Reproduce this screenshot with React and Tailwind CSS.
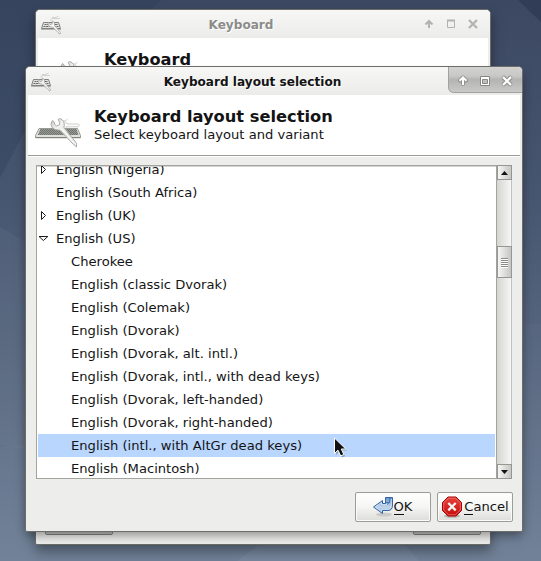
import React from "react";

const rows = [
  { label: "English (Nigeria)", arrow: "closed" },
  { label: "English (South Africa)" },
  { label: "English (UK)", arrow: "closed" },
  { label: "English (US)", arrow: "open" },
  { label: "Cherokee", child: true },
  { label: "English (classic Dvorak)", child: true },
  { label: "English (Colemak)", child: true },
  { label: "English (Dvorak)", child: true },
  { label: "English (Dvorak, alt. intl.)", child: true },
  { label: "English (Dvorak, intl., with dead keys)", child: true },
  { label: "English (Dvorak, left-handed)", child: true },
  { label: "English (Dvorak, right-handed)", child: true },
  { label: "English (intl., with AltGr dead keys)", child: true, selected: true },
  { label: "English (Macintosh)", child: true },
];

function Wallpaper() {
  return (
    <svg className="absolute inset-0" width="541" height="561" viewBox="0 0 541 561">
      <defs>
        <linearGradient id="sky" x1="0" y1="0" x2="0" y2="1">
          <stop offset="0" stopColor="#3c4862" />
          <stop offset="0.35" stopColor="#475670" />
          <stop offset="0.65" stopColor="#596880" />
          <stop offset="1" stopColor="#718197" />
        </linearGradient>
      </defs>
      <rect width="541" height="561" fill="url(#sky)" />
      <path d="M162 0L135 22L36 110L0 178V0Z" fill="#2b3a55" opacity=".3" />
      <path d="M518 0H541V22Z" fill="#25304c" opacity=".5" />
      <path d="M0 227L26 242V450L0 445Z" fill="#7a8aa0" opacity=".12" />
      <path d="M0 447L36 443V561H0Z" fill="#8194ac" opacity=".1" />
      <path d="M522 324L541 324V561H522Z" fill="#8194ac" opacity=".07" />
      <path d="M237 561L258 545H405L419 561Z" fill="#90a0b4" opacity=".2" />
    </svg>
  );
}

function KeyboardSmall() {
  return (
    <svg width="22" height="21" viewBox="0 0 22 21" fill="none">
      <path d="M11 7V5.500Q11 4.500 13 4.500H20M12 3.500H16L18.500 2" stroke="#d3d4d0" strokeWidth="1" />
      <path d="M3.500 8.500H18.500L20.500 14.500H1.500Z" fill="#e4e5e1" stroke="#80827d" />
      <path d="M4.500 10.500H18M3.500 12.500H18.500" stroke="#62655f" strokeWidth="1.200" strokeDasharray="2 .6" />
      <path d="M1 15.500H21" stroke="#b5b6b1" />
      <path d="M8.500 8L10 10.500L12 10L12.500 7Q15.500 8.500 14.500 11.500L20.500 18.500L20 20L18 18.500L12.500 13Q8.500 13.500 8 9.500Z" fill="#f4f4f2" stroke="#999b95" strokeWidth=".7" />
    </svg>
  );
}

function KeyboardLarge() {
  return (
    <svg width="48" height="48" viewBox="0 0 48 48" fill="none">
      <defs>
        <pattern id="keys" width="2" height="2" patternUnits="userSpaceOnUse">
          <rect width="2" height="2" fill="#999c96" />
          <path d="M0 0h1v1H0zM1 1h1v1H1z" fill="#70746e" />
        </pattern>
        <linearGradient id="steel" x1="18" y1="16" x2="42" y2="42" gradientUnits="userSpaceOnUse">
          <stop offset="0" stopColor="#c9cbc6" />
          <stop offset=".25" stopColor="#f2f2f0" />
          <stop offset=".6" stopColor="#e4e5e2" />
          <stop offset="1" stopColor="#f2f2f0" />
        </linearGradient>
      </defs>
      <path d="M29 17Q32 17.500 33.500 15M32 24V22.800H44Q46.500 21.500 44.500 20H34Q31.500 19.500 31 17.500" stroke="#cccec9" strokeWidth="1" />
      <path d="M5 24.500H43.500L46.500 31.500V33.500H1.500V31.500Z" fill="#e0e1dd" stroke="#989a94" strokeWidth="1" />
      <path d="M6.300 25H42.500L44.500 31H3.800Z" fill="url(#keys)" />
      <path d="M1.500 33.700H46.500" stroke="#7b7e78" strokeWidth="1" />
      <path d="M18.500 16.500L17 19.500Q17.300 26 24 26L26 26.300L38 39L42.500 43V39.300L30 23.500Q31.500 16 25.500 14.500L24.200 15.500Q26.500 18.500 25.500 20.800L22.500 22Q20.300 21 20 17.800Z" fill="url(#steel)" stroke="#a2a49e" strokeWidth=".9" strokeLinejoin="round" />
      <path d="M27.500 24.500L39.500 38.500" stroke="#fff" strokeWidth="1" />
    </svg>
  );
}

function PlainControls() {
  return (
    <svg width="60" height="16" viewBox="0 0 60 16" fill="none" stroke="#b2b3b0">
      <path d="M5 12V5M1.500 8.500L5 5L8.500 8.500" strokeWidth="2" />
      <path d="M23.500 4.500H30.500V11.500H23.500Z" />
      <path d="M23 4.500H31" strokeWidth="2" />
      <path d="M45 4L53 12M53 4L45 12" strokeWidth="2.200" />
    </svg>
  );
}

function ActiveControls() {
  return (
    <svg width="74" height="27" viewBox="0 0 74 27" fill="none">
      <defs>
        <linearGradient id="ctl" x1="0" y1="0" x2="0" y2="1">
          <stop offset="0" stopColor="#d2d2d0" />
          <stop offset=".35" stopColor="#c8c8c6" />
          <stop offset=".5" stopColor="#b4b4b2" />
          <stop offset="1" stopColor="#cacac8" />
        </linearGradient>
      </defs>
      <path d="M.5 0V20Q.5 25.500 6 25.500H75V0Z" fill="url(#ctl)" />
      <path d="M.5 0V20Q.5 25.500 6 25.500H75" stroke="#a2a2a0" />
      <g stroke="#92928f" strokeLinejoin="round" strokeLinecap="round">
        <path d="M15 17V10.500M12 13.500L15 10.500L18 13.500" strokeWidth="4" />
        <path d="M56 11L62 17M62 11L56 17" strokeWidth="4.500" />
      </g>
      <path d="M15 18V10M11.500 13.800L15 10.300L18.500 13.800" stroke="#fff" strokeWidth="2" />
      <path d="M55 10L63 18M63 10L55 18" stroke="#fff" strokeWidth="2.200" />
      <path d="M32.500 9.500H41.500V18.500H32.500Z" fill="#fff" stroke="#868683" />
      <path d="M34.500 12.500H39.500V16.500H34.500Z" fill="#bebebc" stroke="#868683" />
    </svg>
  );
}

function Expander({ kind }) {
  return (
    <svg width="12" height="12" viewBox="0 0 12 12" fill="#fff" stroke="#1b1b1b">
      {kind === "closed" && <path d="M3.500 1.500L7.500 5.500L3.500 9.500Z" />}
      {kind === "open" && <path d="M1 3.500H9.800L5.400 7.500Z" />}
    </svg>
  );
}

function ScrollButton({ down }) {
  return (
    <div className="flex h-[15px] w-[15px] shrink-0 items-center justify-center border border-[#979792] bg-linear-to-r from-[#f6f6f5] to-[#c6c6c4]">
      <svg width="7" height="4" viewBox="0 0 7 4" fill="#111">
        {down ? <path d="M0 0H7L3.500 4Z" /> : <path d="M0 4H7L3.500 0Z" />}
      </svg>
    </div>
  );
}

function OkIcon() {
  return (
    <svg width="22" height="22" viewBox="0 0 22 22">
      <defs>
        <linearGradient id="blue" x1="0" y1="0" x2="0" y2="1">
          <stop offset="0" stopColor="#6594cc" />
          <stop offset=".6" stopColor="#c1d5ec" />
          <stop offset="1" stopColor="#83a9d6" />
        </linearGradient>
      </defs>
      <ellipse cx="12" cy="18.500" rx="8" ry="2" fill="#000" opacity=".12" />
      <path d="M13.500 1.500H20.500V9Q20.500 14.500 16 14.500H10.500V17.500L1.500 11L10.500 4.500V7.500H13.500Z" fill="url(#blue)" stroke="#3465a4" strokeLinejoin="round" />
      <path d="M19.300 3V9Q19 13.200 15.500 13.300H9.500V15.500L3.300 11L9.500 6.500V8.500H15" fill="none" stroke="#d3e2f3" strokeWidth=".8" />
      <path d="M14 6.500H17.500L18 2M17.500 6.500L15 8.500" fill="none" stroke="#3465a4" strokeWidth=".8" />
    </svg>
  );
}

function CancelIcon() {
  return (
    <svg width="22" height="22" viewBox="0 0 22 22">
      <defs>
        <linearGradient id="red" x1="0" y1="0" x2="0" y2="1">
          <stop offset="0" stopColor="#e5443f" />
          <stop offset="1" stopColor="#c70c0c" />
        </linearGradient>
      </defs>
      <ellipse cx="11" cy="20" rx="8" ry="1.800" fill="#000" opacity=".22" />
      <path d="M7 1H15L20.500 6.500V14.500L15 20H7L1.500 14.500V6.500Z" fill="url(#red)" stroke="#a80000" />
      <path d="M7.500 2.200H14.500L19.300 7V14L14.500 18.800H7.500L2.700 14V7Z" fill="none" stroke="#f0807c" strokeWidth=".7" />
      <path d="M7.300 7L14.700 14.400M14.700 7L7.300 14.400" stroke="#f3f3f1" strokeWidth="2.300" />
    </svg>
  );
}

function DialogButton({ icon, letter, rest, className }) {
  return (
    <button className={`flex h-[30px] w-[76px] items-center justify-center rounded-[2px] border border-[#9c9d96] bg-linear-to-b from-white via-[#f5f5f3] to-[#dcddd9] shadow-[inset_0_0_0_1px_#fafaf9] ${className}`}>
      {icon}
      <span className="whitespace-nowrap leading-[18px]">
        <span className="inline-block h-[17px] border-b border-[#111] align-top leading-[18px]">{letter}</span>
        {rest}
      </span>
    </button>
  );
}

function BackWindow() {
  return (
    <section className="absolute left-[35px] top-[9px] flex h-[536px] w-[456px] flex-col overflow-hidden rounded-t-[5px] rounded-b-[2px] border border-[#6c6c69] bg-[#ededeb]">
      <header className="flex h-7 shrink-0 items-center bg-linear-to-b from-[#f7f7f6] to-[#ebebe9] pl-1">
        <KeyboardSmall />
        <h1 className="flex-1 pr-[4px] pt-[2px] text-center text-[12.1px] font-bold text-[#8b8c89] [text-shadow:1px_1px_0_#fff]">Keyboard</h1>
        <div className="pr-[6px]"><PlainControls /></div>
      </header>
      <div className="mx-[2px] flex h-[60px] shrink-0 bg-white pl-[6px]">
        <div className="pt-[9px]"><KeyboardLarge /></div>
        <h2 className="pl-3 pt-[12px] text-[16.2px] font-bold leading-5">Keyboard</h2>
      </div>
      <div className="flex-1" />
      <div className="flex justify-between px-[9px] pb-[9px]">
        <div className="h-[30px] w-[68px] rounded-[2px] border border-[#85857f] bg-[#c5c6c1]" />
        <div className="h-[30px] w-[68px] rounded-[2px] border border-[#85857f] bg-[#c5c6c1]" />
      </div>
    </section>
  );
}

function LayoutDialog() {
  return (
    <section className="absolute left-[25px] top-[66px] flex h-[466px] w-[498px] flex-col overflow-hidden rounded-t-[5px] rounded-b-[2px] border border-[#6c6c69] bg-[#ededeb]">
      <header className="flex h-7 shrink-0 items-start bg-linear-to-b from-[#f7f7f6] to-[#ebebe9] pl-1">
        <div className="pt-[4px]"><KeyboardSmall /></div>
        <h1 className="flex-1 pl-[5px] pt-[5px] text-center text-[12.1px] font-bold leading-5 [text-shadow:1px_1px_0_#fff]">Keyboard layout selection</h1>
        <ActiveControls />
      </header>
      <div className="mx-[2px] flex h-[61px] shrink-0 border-b border-[#9b9c96] bg-white pl-[6px]">
        <div className="pt-[9px]"><KeyboardLarge /></div>
        <div className="pl-3 pt-[12px]">
          <h2 className="text-[16.25px] font-bold leading-5">Keyboard layout selection</h2>
          <p className="leading-4">Select keyboard layout and variant</p>
        </div>
      </div>
      <div className="mx-[2px] h-px shrink-0 bg-white" />
      <div className="flex h-[322px] shrink-0 pl-[10px] pt-[8px]">
        <div className="h-[314px] w-[461px] overflow-hidden border border-[#a3a49d] bg-white pl-px pr-px shadow-[inset_0_1px_0_#d3d4cf]">
          <ul className="-mt-[8px]">
            {rows.map((row) => (
              <li
                key={row.label}
                className={`flex h-[23px] items-center whitespace-nowrap ${row.selected ? "bg-[#b9d6fe]" : ""} ${row.child ? "pl-[33px]" : ""}`}
              >
                {!row.child && <span className="w-[18px]"><Expander kind={row.arrow} /></span>}
                <span>{row.label}</span>
              </li>
            ))}
          </ul>
        </div>
        <div className="flex h-[314px] w-[15px] flex-col border-r border-[#c1c2bd] bg-linear-to-r from-[#d4d5d1] to-[#f7f7f6]">
          <ScrollButton />
          <div className="h-[66px] shrink-0" />
          <div className="flex h-8 w-[15px] shrink-0 flex-col items-center justify-center gap-px border border-[#979792] bg-linear-to-r from-[#f6f6f5] to-[#c6c6c4]">
            {[0, 1, 2, 3, 4].map((n) => (
              <i key={n} className="h-px w-[7px] bg-[#8a8a87] shadow-[0_1px_0_#fff]" />
            ))}
          </div>
          <div className="flex-1" />
          <ScrollButton down />
        </div>
      </div>
      <footer className="flex justify-end gap-[6px] pr-[9px] pt-[13px]">
        <DialogButton icon={<OkIcon />} letter="O" rest="K" className="pr-[2px]" />
        <DialogButton icon={<CancelIcon />} letter="C" rest="ancel" className="gap-px" />
      </footer>
    </section>
  );
}

export default function App() {
  return (
    <main className="relative h-[561px] w-[541px] overflow-hidden font-['DejaVu_Sans',sans-serif] text-[13.12px] text-[#141414]">
      <Wallpaper />
      <div className="absolute left-[37px] top-[14px] h-[531px] w-[452px] shadow-[0_4px_12px_2px_rgba(0,0,0,0.38)]" />
      <BackWindow />
      <div className="absolute left-[27px] top-[72px] h-[458px] w-[494px] shadow-[0_4px_10px_1px_rgba(0,0,0,0.42)]" />
      <LayoutDialog />
      <svg className="absolute left-[333px] top-[437px]" width="16" height="22" viewBox="0 0 16 22">
        <path d="M2 2V17L5.500 13.500L8 19.500L11 18.200L8.500 12.500H13Z" fill="#000" opacity=".25" transform="translate(1 1)" />
        <path d="M1.500 1V16.500L5 13.200L7.700 19L10.800 17.500L8.300 12H12.800Z" fill="#111" stroke="#fff" />
      </svg>
    </main>
  );
}
